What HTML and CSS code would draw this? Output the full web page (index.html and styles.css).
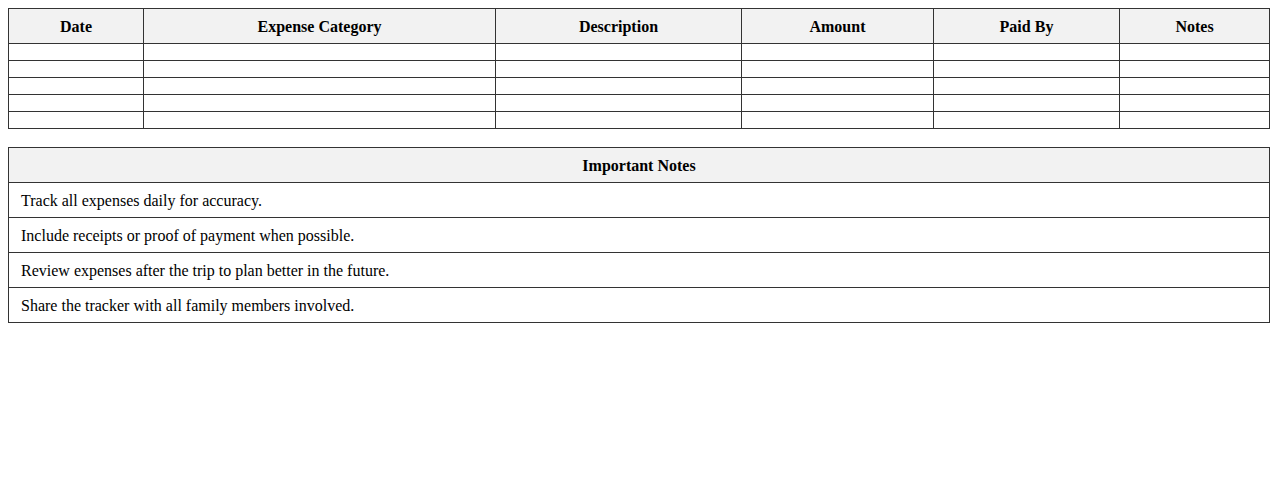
FILE: index.html
```html
<!DOCTYPE html>
<html>
<head>
<meta charset="utf-8">
<link rel="stylesheet" href="styles.css">
</head>
<body>
<table class="grid expenses">
  <colgroup>
    <col class="c-date"><col class="c-cat"><col class="c-desc"><col class="c-amt"><col class="c-paid"><col>
  </colgroup>
  <thead>
    <tr><th>Date</th><th>Expense Category</th><th>Description</th><th>Amount</th><th>Paid By</th><th>Notes</th></tr>
  </thead>
  <tbody>
    <tr><td></td><td></td><td></td><td></td><td></td><td></td></tr>
    <tr><td></td><td></td><td></td><td></td><td></td><td></td></tr>
    <tr><td></td><td></td><td></td><td></td><td></td><td></td></tr>
    <tr><td></td><td></td><td></td><td></td><td></td><td></td></tr>
    <tr><td></td><td></td><td></td><td></td><td></td><td></td></tr>
  </tbody>
</table>
<table class="grid notes">
  <thead>
    <tr><th>Important Notes</th></tr>
  </thead>
  <tbody>
    <tr><td>Track all expenses daily for accuracy.</td></tr>
    <tr><td>Include receipts or proof of payment when possible.</td></tr>
    <tr><td>Review expenses after the trip to plan better in the future.</td></tr>
    <tr><td>Share the tracker with all family members involved.</td></tr>
  </tbody>
</table>
</body>
</html>
```
FILE: styles.css
```css
body {
  margin: 8px;
  font-family: "Liberation Serif", "Times New Roman", serif;
  font-size: 16px;
  color: #000;
  background: #fff;
}
.grid {
  width: 100%;
  border-collapse: collapse;
  table-layout: fixed;
}
.grid th,
.grid td {
  border: 1px solid #333;
  padding: 9px 8px 7px;
  line-height: 18px;
}
.grid th {
  background: #f2f2f2;
  font-weight: bold;
  text-align: center;
}
.expenses td {
  height: 0;
  padding: 8px;
  line-height: 0;
}
.c-date { width: 135px; }
.c-cat { width: 352px; }
.c-desc { width: 246px; }
.c-amt { width: 192px; }
.c-paid { width: 186px; }
.notes {
  margin-top: 18px;
}
.notes td {
  padding: 9px 12px 7px;
  text-align: left;
}
```
